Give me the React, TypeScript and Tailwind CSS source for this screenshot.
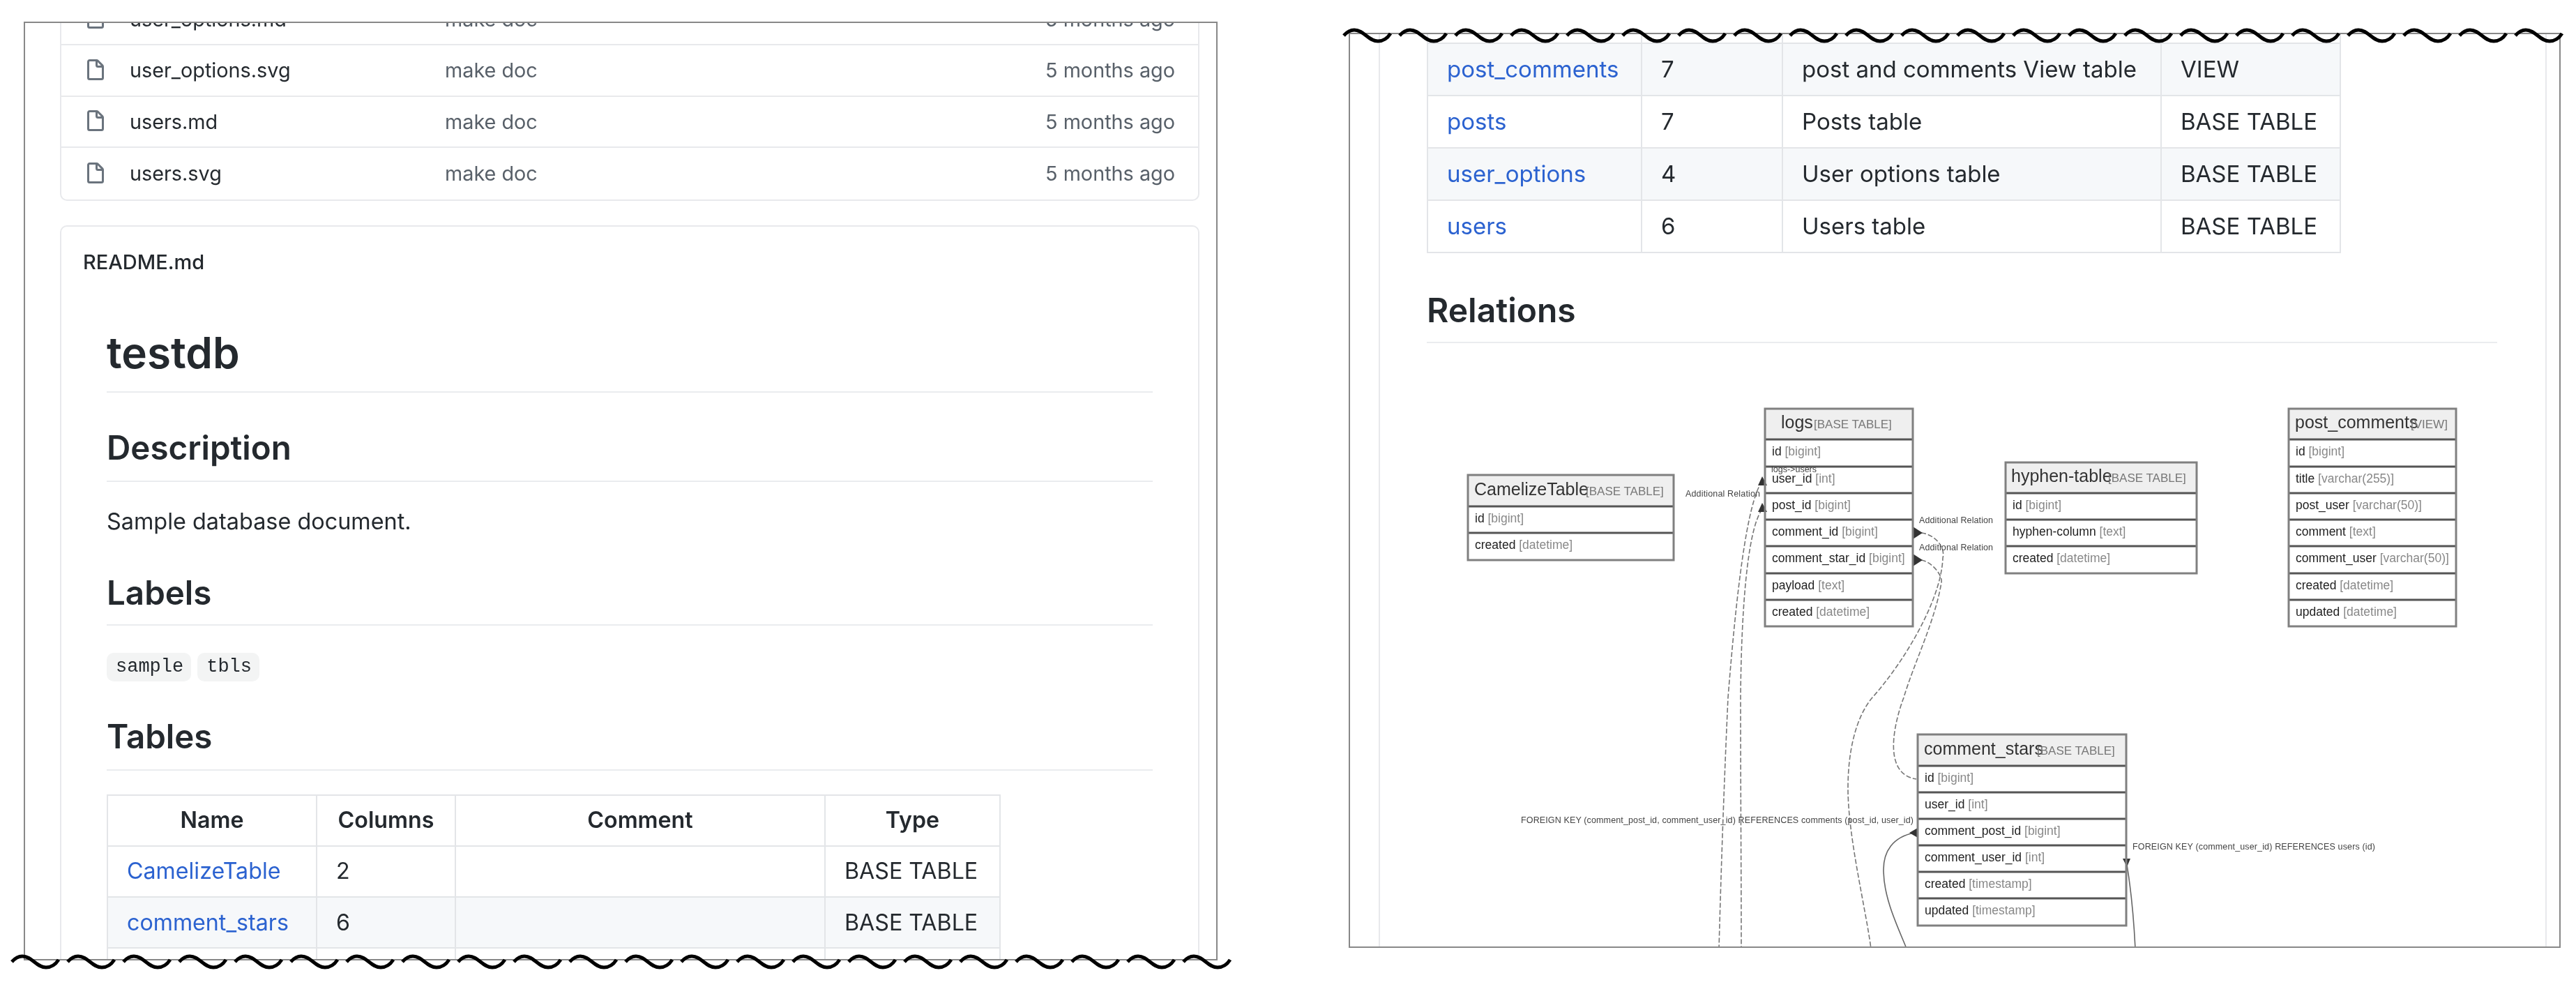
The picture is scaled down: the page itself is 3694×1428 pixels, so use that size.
import React from "react";

const FILE_PATH =
  "M3.75 1.5a.25.25 0 00-.25.25v11.5c0 .138.112.25.25.25h8.5a.25.25 0 00.25-.25V6H9.75A1.75 1.75 0 018 4.25V1.5H3.75zm5.75.56v2.19c0 .138.112.25.25.25h2.19L9.5 2.06zM2 1.75C2 .784 2.784 0 3.75 0h5.086c.464 0 .909.184 1.237.513l3.414 3.414c.329.328.513.773.513 1.237v8.086A1.75 1.75 0 0112.25 15h-8.5A1.75 1.75 0 012 13.25V1.75z";

function Wave({ count, className }: { count: number; className: string }) {
  const segs = Array.from({ length: count }, (_, i) => i);
  return (
    <svg className={className} width={count * 80} height={24} viewBox={`0 0 ${count * 80} 24`} fill="none">
      {segs.map((i) => (
        <path
          key={i}
          transform={`translate(${i * 80} 0)`}
          d="M2 11 Q9 3 17 3 C31 3 37 19 51 19 Q62 19 69 8"
          stroke="#000"
          strokeWidth={5}
        />
      ))}
    </svg>
  );
}

function FileRow({ name, clipped }: { name: string; clipped?: boolean }) {
  return (
    <div className={`flex items-center h-[73.5px] pl-[33px] pr-[33px] border-b-2 border-[#e8e9ec] last:border-b-0 ${clipped ? "-mt-[41.5px]" : ""}`}>
      <svg width={32} height={32} viewBox="0 0 16 16" className="mr-[33px] shrink-0" fill="#6a737d">
        <path fillRule="evenodd" d={FILE_PATH} />
      </svg>
      <span className="w-[452px] text-[28.8px] text-[#24292e]">{name}</span>
      <span className="flex-1 text-[28.8px] text-[#586069]">make doc</span>
      <span className="text-[28.8px] text-[#586069]">5 months ago</span>
    </div>
  );
}

function H2({ children, className }: { children: React.ReactNode; className: string }) {
  return (
    <div className={`flex items-center border-b-2 border-[#eaecef] text-[47.5px] font-semibold text-[#24292e] ${className}`}>
      {children}
    </div>
  );
}

const leftRows = [
  ["CamelizeTable", "2", "", "BASE TABLE"],
  ["comment_stars", "6", "", "BASE TABLE"],
  ["comments", "6", "Comments table", "BASE TABLE"],
];

const rightRows = [
  ["comments", "6", "Comments table", "BASE TABLE"],
  ["post_comments", "7", "post and comments View table", "VIEW"],
  ["posts", "7", "Posts table", "BASE TABLE"],
  ["user_options", "4", "User options table", "BASE TABLE"],
  ["users", "6", "Users table", "BASE TABLE"],
];

type NodeDef = {
  name: string;
  kind: string;
  x: number;
  w: number;
  lines: number[];
  titleX: number;
  kindX: number;
  rows: [string, string][];
};

const nodes: NodeDef[] = [
  {
    name: "CamelizeTable",
    kind: "[BASE TABLE]",
    x: 2105,
    w: 295,
    lines: [681, 726, 764, 803],
    titleX: 2114,
    kindX: 2274,
    rows: [["id", "[bigint]"], ["created", "[datetime]"]],
  },
  {
    name: "logs",
    kind: "[BASE TABLE]",
    x: 2531,
    w: 212,
    lines: [586, 630, 669, 707, 745, 783, 822, 860, 898],
    titleX: 2554,
    kindX: 2601,
    rows: [
      ["id", "[bigint]"],
      ["user_id", "[int]"],
      ["post_id", "[bigint]"],
      ["comment_id", "[bigint]"],
      ["comment_star_id", "[bigint]"],
      ["payload", "[text]"],
      ["created", "[datetime]"],
    ],
  },
  {
    name: "hyphen-table",
    kind: "[BASE TABLE]",
    x: 2876,
    w: 274,
    lines: [663, 707, 745, 783, 822],
    titleX: 2884,
    kindX: 3023,
    rows: [["id", "[bigint]"], ["hyphen-column", "[text]"], ["created", "[datetime]"]],
  },
  {
    name: "post_comments",
    kind: "[VIEW]",
    x: 3282,
    w: 240,
    lines: [586, 630, 669, 707, 745, 783, 822, 860, 898],
    titleX: 3291,
    kindX: 3457,
    rows: [
      ["id", "[bigint]"],
      ["title", "[varchar(255)]"],
      ["post_user", "[varchar(50)]"],
      ["comment", "[text]"],
      ["comment_user", "[varchar(50)]"],
      ["created", "[datetime]"],
      ["updated", "[datetime]"],
    ],
  },
  {
    name: "comment_stars",
    kind: "[BASE TABLE]",
    x: 2750,
    w: 299,
    lines: [1053, 1098, 1136, 1174, 1212, 1250, 1288, 1327],
    titleX: 2759,
    kindX: 2921,
    rows: [
      ["id", "[bigint]"],
      ["user_id", "[int]"],
      ["comment_post_id", "[bigint]"],
      ["comment_user_id", "[int]"],
      ["created", "[timestamp]"],
      ["updated", "[timestamp]"],
    ],
  },
];

function DiagramNode({ n }: { n: NodeDef }) {
  const top = n.lines[0];
  const hb = n.lines[1];
  const bottom = n.lines[n.lines.length - 1];
  return (
    <g fontFamily="'Liberation Sans', sans-serif">
      <rect x={n.x} y={top} width={n.w} height={hb - top} fill="#efefef" />
      <text x={n.titleX} y={(top + hb) / 2 + 6} fontSize={25} fill="#333">{n.name}</text>
      <text x={n.kindX} y={(top + hb) / 2 + 6} fontSize={17} fill="#777">{n.kind}</text>
      {n.rows.map(([c, t], i) => (
        <text key={i} x={n.x + 10} y={n.lines[i + 1] + 23} fontSize={17.5} fill="#222">
          {c} <tspan fill="#888">{t}</tspan>
        </text>
      ))}
      {n.lines.slice(1, -1).map((y, i) => (
        <line key={i} x1={n.x} x2={n.x + n.w} y1={y} y2={y} stroke="#555" strokeWidth={3} />
      ))}
      <rect x={n.x} y={top} width={n.w} height={bottom - top} fill="none" stroke="#808080" strokeWidth={3} />
    </g>
  );
}

function Diagram() {
  return (
    <svg width={1533} height={860} viewBox="2046 500 1533 860" className="block blur-[0.6px]" fill="none">
      <g stroke="#777" strokeWidth={1.6} strokeDasharray="7 3">
        <path d="M2527 690 C2505 720 2490 850 2478 1000 C2472 1130 2468 1250 2465 1360" />
        <path d="M2527 730 C2505 760 2497 880 2496 1000 C2496 1130 2497 1250 2497 1360" />
        <path d="M2755 764 C2775 766 2790 785 2786 800 C2784 860 2730 950 2685 1000 C2660 1030 2650 1080 2650 1130 C2650 1200 2675 1300 2683 1360" />
        <path d="M2755 803 C2770 805 2786 825 2784 835 C2775 890 2745 950 2730 1000 C2715 1040 2700 1110 2748 1117" />
      </g>
      <g stroke="#666" strokeWidth={1.6}>
        <path d="M2745 1194 C2715 1200 2700 1220 2701 1250 C2702 1290 2722 1330 2734 1360" />
        <path d="M3050 1240 C3055 1270 3060 1320 3062 1360" />
      </g>
      <g fill="#333">
        <polygon points="2527,683 2521,696 2534,696" />
        <polygon points="2527,721 2521,734 2534,734" />
        <polygon points="2743,755 2743,773 2757,764" />
        <polygon points="2743,794 2743,812 2757,803" />
        <polygon points="2750,1187 2750,1201 2738,1194" />
        <polygon points="3044,1231 3055,1231 3050,1243" />
      </g>
      {nodes.map((n) => (
        <DiagramNode key={n.name} n={n} />
      ))}
      <g fontFamily="'Liberation Sans', sans-serif" fontSize={12.5} fill="#444">
        <text x={2417} y={712} textLength={107}>Additional Relation</text>
        <text x={2752} y={750} textLength={106}>Additional Relation</text>
        <text x={2752} y={789} textLength={106}>Additional Relation</text>
        <text x={2540} y={677} textLength={65}>logs-&gt;users</text>
        <text x={2181} y={1180} textLength={563}>FOREIGN KEY (comment_post_id, comment_user_id) REFERENCES comments (post_id, user_id)</text>
        <text x={3058} y={1218} textLength={348}>FOREIGN KEY (comment_user_id) REFERENCES users (id)</text>
      </g>
    </svg>
  );
}

export default function App() {
  return (
    <div className="flex items-start w-[3694px] h-[1428px] bg-white overflow-hidden font-['Inter',sans-serif] blur-[0.5px]">
      <div className="relative ml-[34px] mt-[31px] w-[1712px] h-[1346px]">
        <div className="h-full border-2 border-[#888] overflow-hidden pl-[50px] pr-[24px] bg-white">
          <div className="border-x-2 border-b-2 border-[#e8e9ec] rounded-b-[10px] -mt-[3px]">
            <FileRow name="user_options.md" clipped />
            <FileRow name="user_options.svg" />
            <FileRow name="users.md" />
            <FileRow name="users.svg" />
          </div>
          <div className="mt-[35px] border-2 border-[#e8e9ec] rounded-t-[10px] pb-[200px]">
            <div className="flex items-center h-[102px] pl-[31px] text-[29px] font-medium text-[#24292e]">README.md</div>
            <div className="px-[65px]">
              <div className="flex items-center h-[112px] mt-[24px] border-b-2 border-[#eaecef] text-[62px] font-semibold text-[#24292e]">testdb</div>
              <H2 className="h-[95px] mt-[33px]">Description</H2>
              <div className="flex items-center h-[48px] mt-[34px] text-[32.4px] text-[#24292e]">Sample database document.</div>
              <H2 className="h-[92px] mt-[32px]">Labels</H2>
              <div className="flex items-center gap-[9px] mt-[39px]">
                <code className="flex items-center h-[41px] pl-[13px] pr-[11px] rounded-[10px] bg-[#f3f4f4] font-['Liberation_Mono',monospace] text-[27px] text-[#24292e]">sample</code>
                <code className="flex items-center h-[41px] pl-[13px] pr-[11px] rounded-[10px] bg-[#f3f4f4] font-['Liberation_Mono',monospace] text-[27px] text-[#24292e]">tbls</code>
              </div>
              <H2 className="h-[96px] mt-[32px]">Tables</H2>
              <table className="mt-[34px] border-collapse table-fixed w-[1280px] text-[32.2px] text-[#24292e]">
                <colgroup>
                  <col className="w-[300px]" />
                  <col className="w-[199px]" />
                  <col className="w-[530px]" />
                  <col className="w-[251px]" />
                </colgroup>
                <thead>
                  <tr className="h-[73.3px]">
                    {["Name", "Columns", "Comment", "Type"].map((h) => (
                      <th key={h} className="border-2 border-[#e3e5e8] font-semibold text-center p-0">{h}</th>
                    ))}
                  </tr>
                </thead>
                <tbody>
                  {leftRows.map((r, i) => (
                    <tr key={r[0]} className={`h-[73.3px] ${i % 2 === 1 ? "bg-[#f6f8fa]" : "bg-white"}`}>
                      <td className="border-2 border-[#e3e5e8] px-[27px] text-[#2b62d0]">{r[0]}</td>
                      <td className="border-2 border-[#e3e5e8] px-[27px]">{r[1]}</td>
                      <td className="border-2 border-[#e3e5e8] px-[27px]">{r[2]}</td>
                      <td className="border-2 border-[#e3e5e8] px-[27px] whitespace-nowrap">{r[3]}</td>
                    </tr>
                  ))}
                </tbody>
              </table>
            </div>
          </div>
        </div>
        <Wave count={22} className="absolute left-[-19px] top-[1337px]" />
      </div>

      <div className="relative ml-[188px] mt-[47px] w-[1738px] h-[1312px]">
        <div className="h-full border-2 border-[#888] overflow-hidden pl-[41px] pr-[18px] bg-white">
          <div className="border-x-2 border-[#e8e9ec] pl-[67px] pr-[69px] h-[1500px]">
            <table className="-mt-[63px] border-collapse table-fixed w-[1309px] text-[33px] text-[#24292e]">
              <colgroup>
                <col className="w-[307px]" />
                <col className="w-[202px]" />
                <col className="w-[543px]" />
                <col className="w-[257px]" />
              </colgroup>
              <tbody>
                {rightRows.map((r, i) => (
                  <tr key={r[0]} className={`h-[75px] ${i === 1 || i === 3 ? "bg-[#f6f8fa]" : "bg-white"}`}>
                    <td className="border-2 border-[#e3e5e8] px-[27px] text-[#2b62d0]">{r[0]}</td>
                    <td className="border-2 border-[#e3e5e8] px-[27px]">{r[1]}</td>
                    <td className="border-2 border-[#e3e5e8] px-[27px] whitespace-nowrap">{r[2]}</td>
                    <td className="border-2 border-[#e3e5e8] px-[27px] whitespace-nowrap">{r[3]}</td>
                  </tr>
                ))}
              </tbody>
            </table>
            <div className="flex items-center h-[92px] mt-[37px] border-b-2 border-[#eaecef] text-[48px] font-semibold text-[#24292e]">Relations</div>
            <div className="mt-[8px]">
              <Diagram />
            </div>
          </div>
        </div>
        <Wave count={22} className="absolute left-[-9px] top-[-7px]" />
      </div>
    </div>
  );
}
